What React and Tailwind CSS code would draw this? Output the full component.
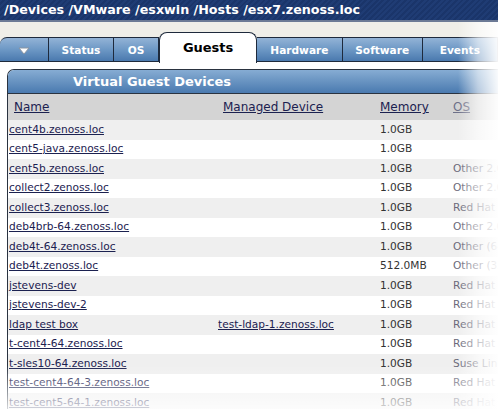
const guests = [
  { name: 'cent4b.zenoss.loc', device: '', memory: '1.0GB', os: '' },
  { name: 'cent5-java.zenoss.loc', device: '', memory: '1.0GB', os: '' },
  { name: 'cent5b.zenoss.loc', device: '', memory: '1.0GB', os: 'Other 2.6x Linux (32-bit)' },
  { name: 'collect2.zenoss.loc', device: '', memory: '1.0GB', os: 'Other 2.6x Linux (32-bit)' },
  { name: 'collect3.zenoss.loc', device: '', memory: '1.0GB', os: 'Red Hat Enterprise Linux 5' },
  { name: 'deb4brb-64.zenoss.loc', device: '', memory: '1.0GB', os: 'Other 2.6x Linux (64-bit)' },
  { name: 'deb4t-64.zenoss.loc', device: '', memory: '1.0GB', os: 'Other (64-bit)' },
  { name: 'deb4t.zenoss.loc', device: '', memory: '512.0MB', os: 'Other (32-bit)' },
  { name: 'jstevens-dev', device: '', memory: '1.0GB', os: 'Red Hat Enterprise Linux 5' },
  { name: 'jstevens-dev-2', device: '', memory: '1.0GB', os: 'Red Hat Enterprise Linux 5' },
  { name: 'ldap test box', device: 'test-ldap-1.zenoss.loc', memory: '1.0GB', os: 'Red Hat Enterprise Linux 5' },
  { name: 't-cent4-64.zenoss.loc', device: '', memory: '1.0GB', os: 'Red Hat Enterprise Linux 4' },
  { name: 't-sles10-64.zenoss.loc', device: '', memory: '1.0GB', os: 'Suse Linux Enterprise 10' },
  { name: 'test-cent4-64-3.zenoss.loc', device: '', memory: '1.0GB', os: 'Red Hat Enterprise Linux 4' },
  { name: 'test-cent5-64-1.zenoss.loc', device: '', memory: '1.0GB', os: 'Red Hat Enterprise Linux 5' },
];

const tabBase =
  'h-[25px] pt-[3px] flex items-center justify-center border border-[#1e2a3c] border-l-0 bg-gradient-to-b from-[#93b3d6] via-[#6d98c5] to-[#4a79ae] text-white font-bold text-[10.6px]';

const App = () => {
  return (
    <div className="relative w-[498px] h-[409px] overflow-hidden bg-white font-['DejaVu_Sans',Verdana,sans-serif]">
      {/* Breadcrumb bar */}
      <div className="h-[20px] flex items-center pl-[4px] bg-[repeating-linear-gradient(135deg,#1f3c74_0px,#1f3c74_2px,#1a356a_2px,#1a356a_4px)]">
        <span className="text-white font-bold text-[12.7px] leading-none whitespace-nowrap">
          /Devices /VMware /esxwin /Hosts /esx7.zenoss.loc
        </span>
      </div>
      <div className="h-[2px] bg-[#6c7a95]" />

      {/* Tabs */}
      <div className="h-[40px] bg-[#efeee8] flex items-end">
        <div className={`${tabBase} w-[52px] border-l-0 rounded-tl-[7px]`}>
          <svg width="12" height="8" viewBox="0 0 12 8">
            <path d="M1 1 L11 1 L6 7 Z" fill="#fff" stroke="#8a95a3" strokeWidth="1" />
          </svg>
        </div>
        <div className={`${tabBase} w-[69px]`}>Status</div>
        <div className={`${tabBase} w-[48px]`}>OS</div>
        <div className="h-[31px] w-[104px] -mb-px bg-white border border-b-0 border-[#1e2a3c] rounded-t-[8px] flex items-center justify-center text-[13px] font-bold text-black">
          Guests
        </div>
        <div className={`${tabBase} w-[91px]`}>Hardware</div>
        <div className={`${tabBase} w-[85px]`}>Software</div>
        <div className={`${tabBase} w-[80px]`}>Events</div>
      </div>

      {/* Panel */}
      <div className="pt-[7px] pl-[7px]">
        <div className="w-[560px] border-l border-t border-[#2a3340] rounded-tl-[7px] overflow-hidden">
          <div className="h-[24px] flex items-center pl-[65px] bg-gradient-to-b from-[#86acd3] via-[#6893c1] to-[#4a7ab0] border-b border-[#2a3340]">
            <span className="text-white font-bold text-[13px]">Virtual Guest Devices</span>
          </div>
          <div className="h-[26px] flex items-center bg-[#d4d4d4] text-[12px]">
            <div className="w-[210px] pl-[6px]"><span className="underline text-[#1b2150]">Name</span></div>
            <div className="w-[162px] pl-[5px]"><span className="underline text-[#1b2150]">Managed Device</span></div>
            <div className="w-[72px]"><span className="underline text-[#1b2150]">Memory</span></div>
            <div className="flex-1 pl-[1px]"><span className="underline text-[#6d7088]">OS</span></div>
          </div>
          {guests.map((g, i) => (
            <div
              key={g.name}
              className={`h-[19.5px] flex items-center text-[10.6px] ${i % 2 === 0 ? 'bg-[#efefef]' : 'bg-white'}`}
            >
              <div className="w-[210px] pl-[1px] whitespace-nowrap">
                <span className="underline text-[#1b2150]">{g.name}</span>
              </div>
              <div className="w-[162px] whitespace-nowrap">
                {g.device && <span className="underline text-[#1b2150]">{g.device}</span>}
              </div>
              <div className="w-[73px] text-[#333]">{g.memory}</div>
              <div className="flex-1 whitespace-nowrap text-[#6a6a7a] overflow-hidden">{g.os}</div>
            </div>
          ))}
        </div>
      </div>

      {/* fade overlays */}
      <div className="absolute top-[22px] right-0 bottom-0 w-[40px] bg-gradient-to-r from-white/0 via-white/60 to-white/95" />
      <div className="absolute left-0 right-0 bottom-0 h-[44px] bg-gradient-to-b from-white/0 to-white/80" />
    </div>
  );
};

export default App;
